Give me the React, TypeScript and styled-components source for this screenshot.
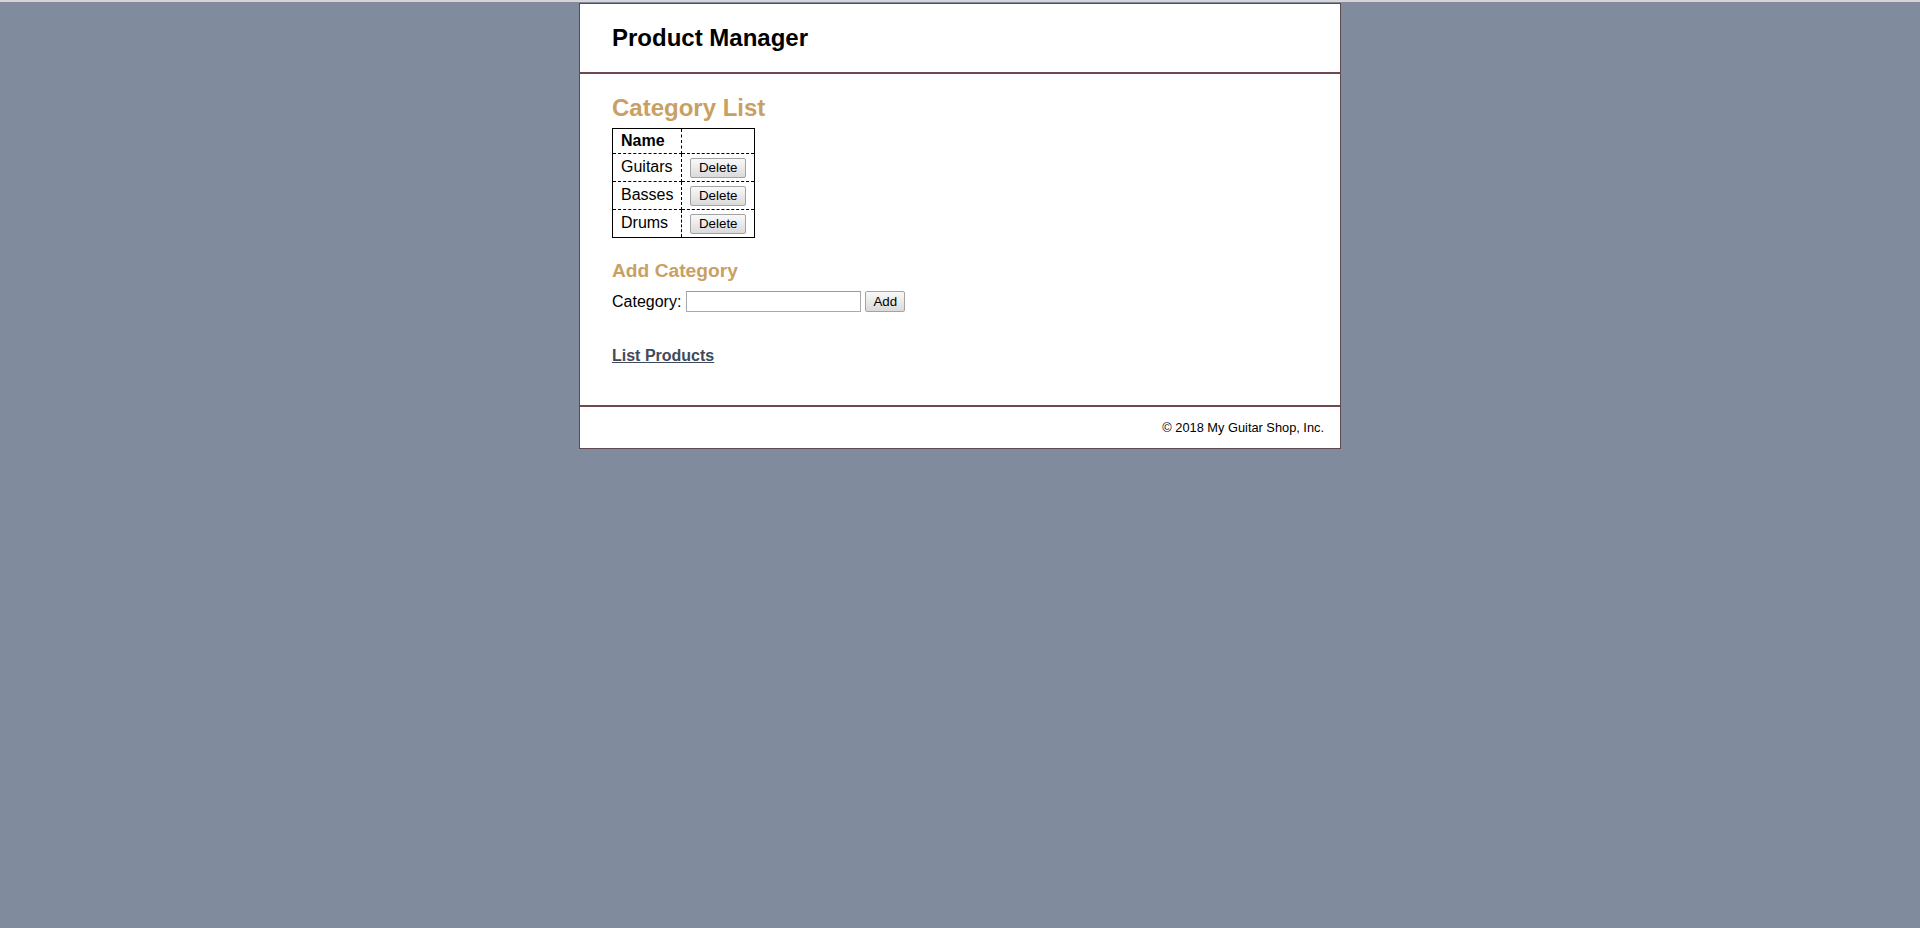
import React from "react";
import styled, { createGlobalStyle } from "styled-components";

const GlobalStyle = createGlobalStyle`
  html, body {
    margin: 0;
    padding: 0;
  }
  body {
    background-color: #808c9e;
    font-family: "Liberation Sans", Arial, Helvetica, sans-serif;
    font-size: 16px;
    color: #000;
  }
`;

const TopEdge = styled.div`
  height: 2px;
  background: #d9d5d7;
`;

const Page = styled.div`
  width: 760px;
  margin: 1px auto 0;
  background: #fff;
  border: 1px solid #5e4a4e;
`;

const Header = styled.header`
  padding: 0 32px;
  border-bottom: 2px solid #6c4a50;
`;

const AppTitle = styled.h1`
  margin: 0;
  padding: 20px 0;
  font-size: 24px;
  font-weight: bold;
  color: #000;
`;

const Main = styled.main`
  padding: 8px 32px;
`;

const SectionTitle = styled.h1`
  margin: 0;
  padding: 12px 0 6px;
  font-size: 24px;
  font-weight: bold;
  color: #c9a063;
`;

const SubTitle = styled.h2`
  margin: 22px 0 0;
  padding: 0;
  font-size: 19.2px;
  font-weight: bold;
  color: #c9a063;
`;

const Table = styled.table`
  border: 1px solid #000;
  border-collapse: collapse;
`;

const Th = styled.th`
  border: 1px dashed #000;
  padding: 3.2px 8px;
  text-align: left;
  vertical-align: top;
  font-size: 16px;
  font-weight: bold;
`;

const Td = styled.td`
  border: 1px dashed #000;
  padding: 3.6px 8px 3.4px;
  text-align: left;
  vertical-align: top;
  font-size: 16px;
`;

const Button = styled.button`
  box-sizing: border-box;
  height: 20px;
  margin: 0;
  padding: 0 7.5px;
  font-family: "Liberation Sans", Arial, sans-serif;
  font-size: 13.33px;
  color: #000;
  background: linear-gradient(#f9f9f9, #dadada);
  border: 1px solid #a3a3a3;
  border-radius: 2px;
  line-height: 18px;
  display: block;
`;

const AddButton = styled(Button)`
  padding: 0 7px;
  height: 21px;
  line-height: 19px;
`;

const AddForm = styled.form`
  display: flex;
  align-items: center;
  margin-top: 9px;
`;

const Label = styled.label`
  font-size: 16px;
`;

const TextInput = styled.input`
  box-sizing: border-box;
  width: 175px;
  height: 21px;
  margin: 0 4px 0 5px;
  padding: 1px 2px;
  border: 1px solid #a9a9a9;
  border-top-color: #999;
  font-size: 13.33px;
  font-family: "Liberation Sans", Arial, sans-serif;
`;

const LinkPara = styled.p`
  margin: 35px 0 16px;
  font-size: 16px;
`;

const NavLink = styled.a`
  color: #414a5a;
  font-weight: bold;
  text-decoration: underline;
`;

const Footer = styled.footer`
  margin-top: 16px;
  border-top: 2px solid #6c4a50;
  padding-right: 16px;
`;

const Copyright = styled.p`
  margin: 12.8px 0;
  font-size: 12.8px;
  text-align: right;
`;

const categories = ["Guitars", "Basses", "Drums"];

export default function App() {
  return (
    <>
      <GlobalStyle />
      <TopEdge />
      <Page>
        <Header>
          <AppTitle>Product Manager</AppTitle>
        </Header>
        <Main>
          <SectionTitle>Category List</SectionTitle>
          <Table>
            <thead>
              <tr>
                <Th>Name</Th>
                <Th>&nbsp;</Th>
              </tr>
            </thead>
            <tbody>
              {categories.map((c) => (
                <tr key={c}>
                  <Td>{c}</Td>
                  <Td>
                    <Button type="button">Delete</Button>
                  </Td>
                </tr>
              ))}
            </tbody>
          </Table>
          <SubTitle>Add Category</SubTitle>
          <AddForm onSubmit={(e) => e.preventDefault()}>
            <Label>Category:</Label>
            <TextInput type="text" />
            <AddButton type="submit">Add</AddButton>
          </AddForm>
          <LinkPara>
            <NavLink href="#">List Products</NavLink>
          </LinkPara>
        </Main>
        <Footer>
          <Copyright>© 2018 My Guitar Shop, Inc.</Copyright>
        </Footer>
      </Page>
    </>
  );
}
